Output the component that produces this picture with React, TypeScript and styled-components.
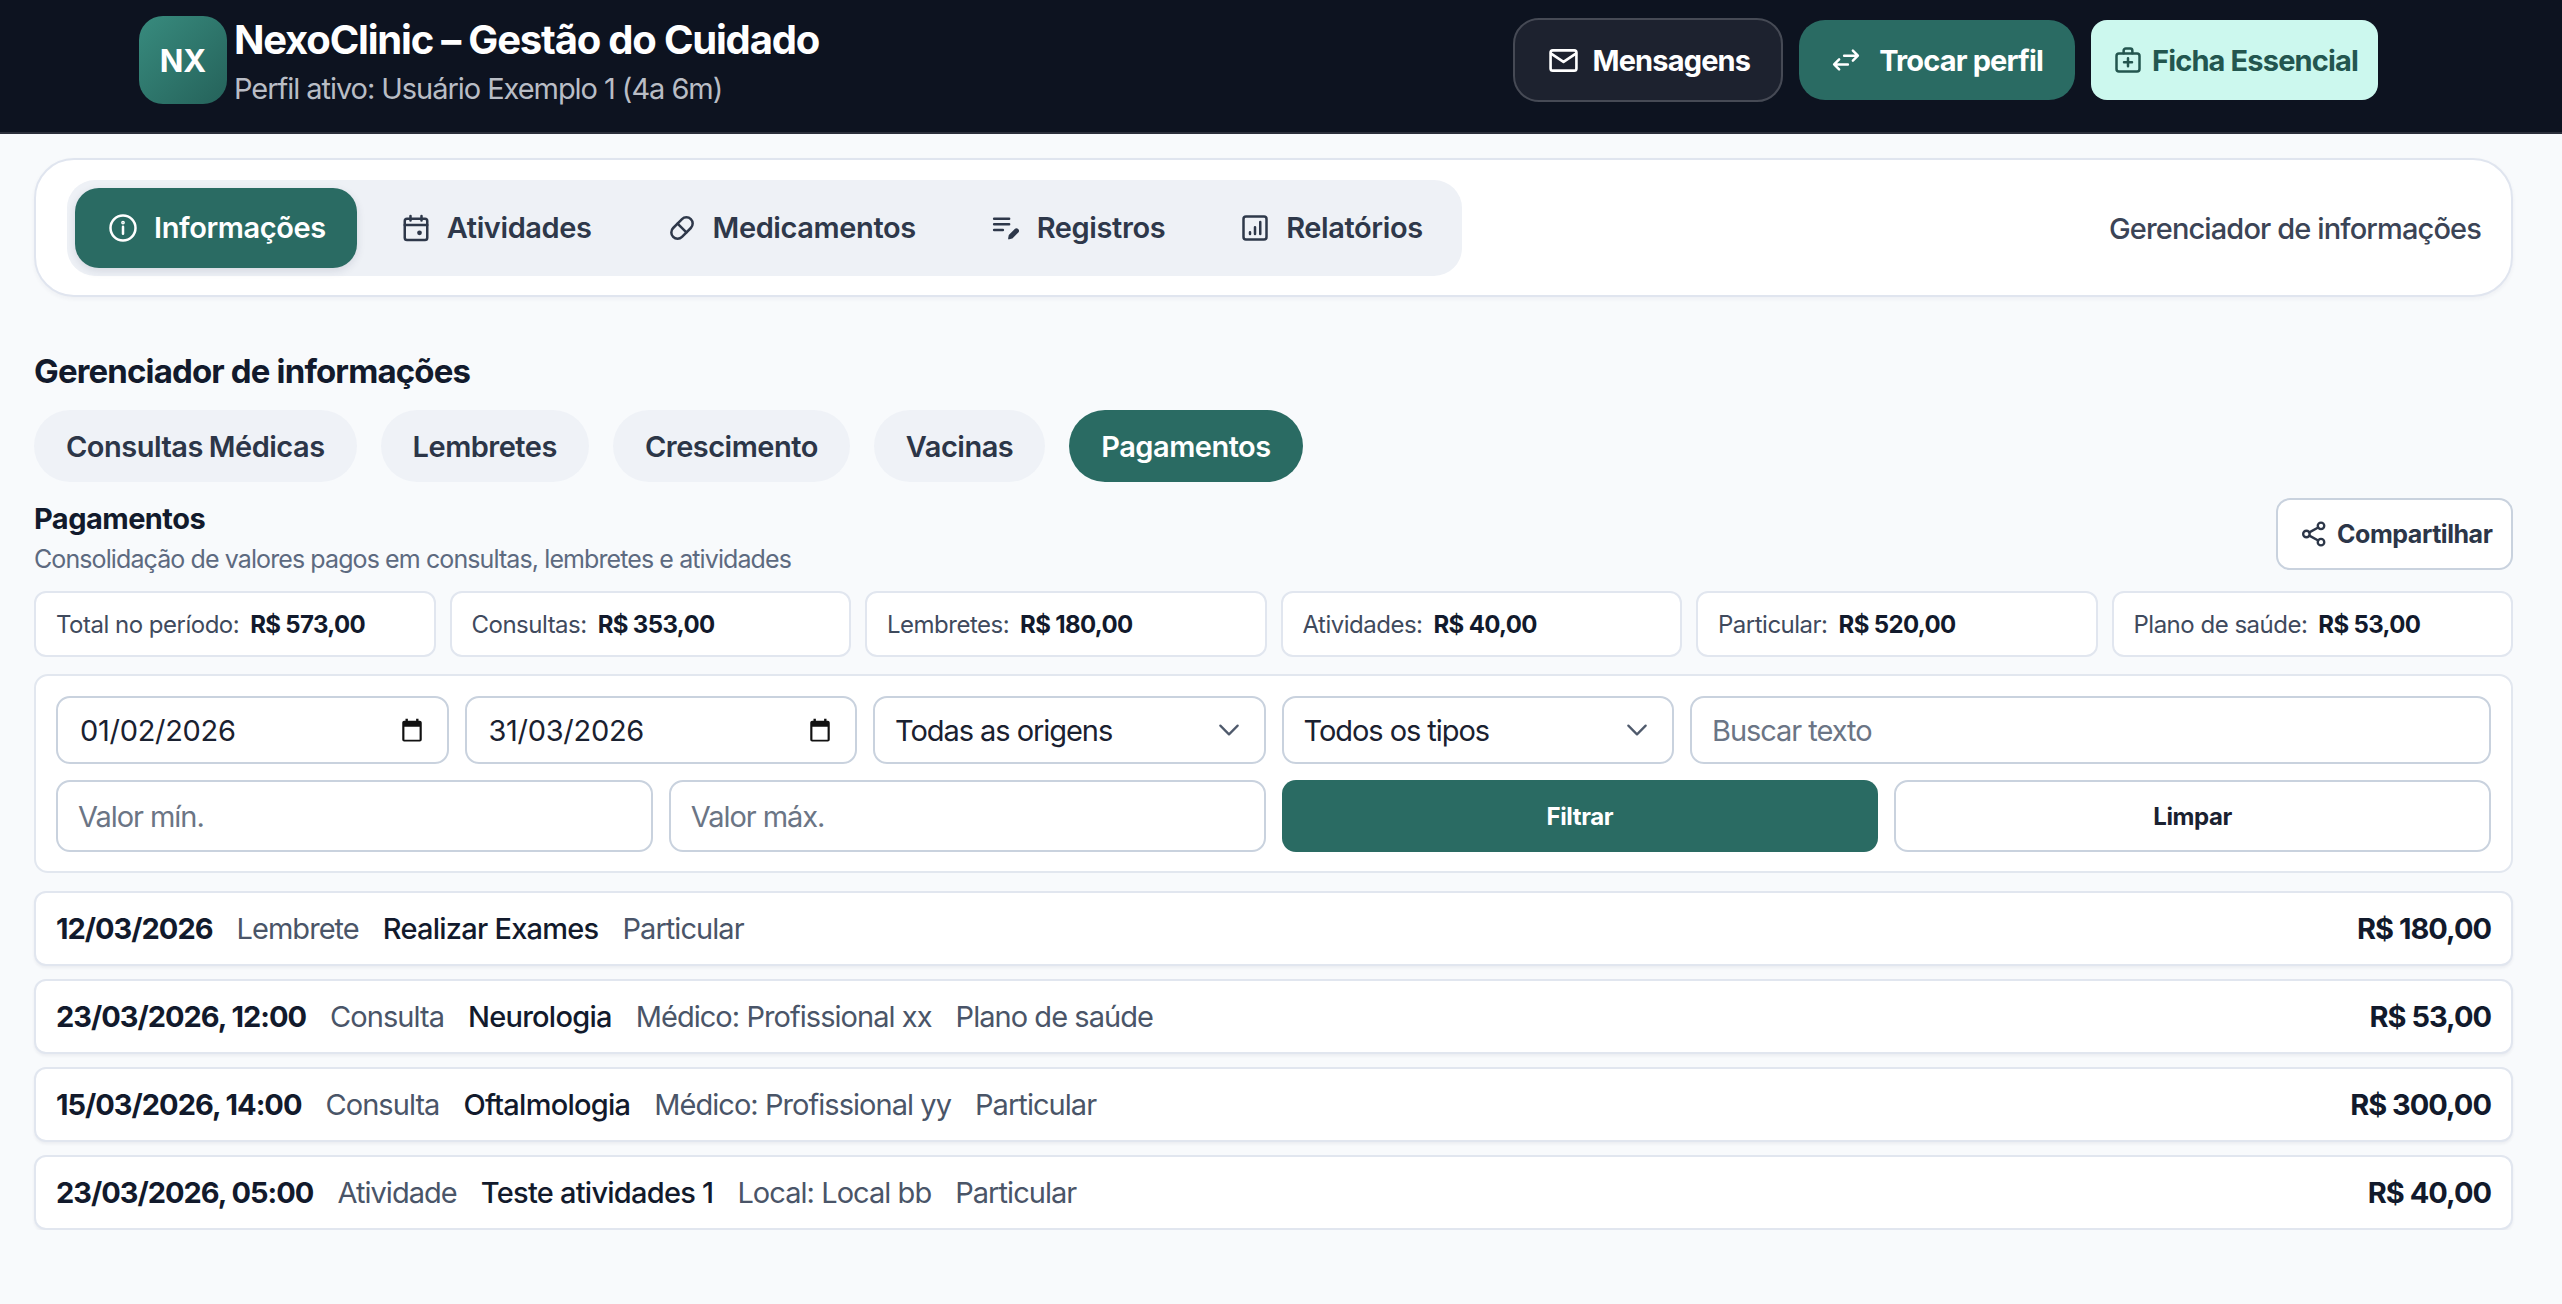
import React from 'react';
import styled, { createGlobalStyle } from 'styled-components';

const Global = createGlobalStyle`
  html, body { margin: 0; padding: 0; background: #f8fafc; }
  body { font-family: Inter, "Liberation Sans", sans-serif; color: #121a2c; }
  * { box-sizing: border-box; }
`;

const green = '#2a6b63';

const Ic = ({ size = 30, children, w = 2 }: { size?: number; children: React.ReactNode; w?: number }) => (
  <svg width={size} height={size} viewBox="0 0 24 24" fill="none" stroke="currentColor" strokeWidth={w} strokeLinecap="round" strokeLinejoin="round" style={{ flex: 'none' }}>
    {children}
  </svg>
);

const MailIcon = () => (
  <Ic size={33} w={1.9}><rect x="2.6" y="4.6" width="18.8" height="14.8" rx="1.6" /><path d="M3 7l9 6 9-6" /></Ic>
);
const SwapIcon = () => (
  <Ic><path d="M21 8.5H10.5M17.5 4.5l4 4-4 4M3 15.5h10.5M6.5 11.5l-4 4 4 4" /></Ic>
);
const BagIcon = () => (
  <Ic><rect x="2.8" y="6.8" width="18.4" height="14.4" rx="2" /><path d="M8.5 6.5V4.5a1.7 1.7 0 0 1 1.7-1.7h3.6a1.7 1.7 0 0 1 1.7 1.7v2M12 10.6v6.4M8.8 13.8h6.4" /></Ic>
);
const InfoIcon = () => (
  <Ic><circle cx="12" cy="12" r="10" /><path d="M12 11v5.5" /><circle cx="12" cy="7.6" r="0.5" fill="currentColor" /></Ic>
);
const CalendarIcon = () => (
  <Ic><rect x="3" y="4.5" width="18" height="17" rx="1.8" /><path d="M3 9.5h18M7.6 2.4v3.6M16.4 2.4v3.6" /><circle cx="14.8" cy="15.8" r="1.9" fill="currentColor" stroke="none" /></Ic>
);
const PillIcon = () => (
  <Ic><g transform="rotate(-45 12 12)"><rect x="2" y="7" width="20" height="10" rx="5" /><path d="M12 7v10" /></g></Ic>
);
const NotesIcon = () => (
  <Ic><path d="M2.5 4.5h12M2.5 9h12M2.5 13.5h7" /><path d="M14.4 20.4l.5-2.6 4.6-4.6a1.2 1.2 0 0 1 1.7 0l.2.2a1.2 1.2 0 0 1 0 1.7l-4.6 4.6z" fill="currentColor" strokeWidth="1.4" /></Ic>
);
const ChartIcon = () => (
  <Ic><rect x="2.8" y="2.8" width="18.4" height="18.4" rx="2" /><path d="M8 15.4v1.4M12 11.4v5.4M16.2 7.2v9.6" /></Ic>
);
const ShareIcon = () => (
  <Ic size={28}><circle cx="18" cy="5" r="2.8" /><circle cx="5.5" cy="12" r="2.8" /><circle cx="18" cy="19" r="2.8" /><path d="M8 10.6l7.6-4.2M8 13.4l7.6 4.2" /></Ic>
);
const DateIcon = () => (
  <svg width="26" height="26" viewBox="0 0 24 24" style={{ flex: 'none' }}>
    <path fill="#111" d="M6 1.5h2.2v2h7.6v-2H18v2h1.2c1 0 1.8.8 1.8 1.8v15.4c0 1-.8 1.8-1.8 1.8H4.8c-1 0-1.8-.8-1.8-1.8V5.3c0-1 .8-1.8 1.8-1.8H6zM5 9v12h14V9z" />
  </svg>
);
const ChevronIcon = () => (
  <svg width="26" height="26" viewBox="0 0 24 24" fill="none" stroke="#4f5a6c" strokeWidth="2.1" strokeLinecap="round" strokeLinejoin="round" style={{ flex: 'none' }}>
    <path d="M4 8l8 8 8-8" />
  </svg>
);

const Header = styled.header`
  display: flex;
  justify-content: space-between;
  align-items: flex-start;
  height: 134px;
  padding: 16px 184px 0 139px;
  background: #0d1320;
  border-bottom: 2px solid #2b2f3b;
`;
const Brand = styled.div`
  display: flex;
  gap: 7px;
`;
const Logo = styled.div`
  width: 88px;
  height: 88px;
  border-radius: 24px;
  background: linear-gradient(135deg, #388b7e, #25625a);
  color: #fff;
  font-size: 31px;
  font-weight: 700;
  display: flex;
  align-items: center;
  justify-content: center;
`;
const BrandTitle = styled.div`
  font-size: 40px;
  line-height: 48px;
  font-weight: 700;
  color: #fff;
  letter-spacing: -1.2px;
  white-space: nowrap;
`;
const BrandSub = styled.div`
  margin-top: 5px;
  font-size: 29px;
  line-height: 40px;
  color: #b9bdc5;
  letter-spacing: -1.05px;
  white-space: nowrap;
`;
const Actions = styled.div`
  display: flex;
  align-items: center;
  gap: 16px;
  height: 88px;
`;
const buttonPadding = { dark: '0 31px 0 32px', green: '0 32px', mint: '0 20px 0 22px' };
const buttonGap = { dark: '12px', green: '18px', mint: '9px' };
const HeadButton = styled.button<{ $kind: 'dark' | 'green' | 'mint' }>`
  display: flex;
  align-items: center;
  border-radius: ${(p) => (p.$kind === 'mint' ? '16px' : '26px')};
  font-family: inherit;
  font-size: 29px;
  font-weight: 700;
  letter-spacing: -0.85px;
  white-space: nowrap;
  height: ${(p) => (p.$kind === 'dark' ? '84px' : '80px')};
  gap: ${(p) => buttonGap[p.$kind]};
  padding: ${(p) => buttonPadding[p.$kind]};
  background: ${(p) => (p.$kind === 'dark' ? '#1d222f' : p.$kind === 'green' ? green : '#ccf8ee')};
  color: ${(p) => (p.$kind === 'mint' ? '#23564f' : '#fff')};
  border: ${(p) => (p.$kind === 'dark' ? '2px solid #464a55' : 'none')};
`;

const Main = styled.main`
  padding: 24px 49px 0 34px;
`;
const NavCard = styled.nav`
  display: flex;
  align-items: center;
  justify-content: space-between;
  height: 139px;
  padding: 0 30px 0 31px;
  background: #fff;
  border: 2px solid #e0e5ef;
  border-radius: 40px;
  box-shadow: 0 2px 4px rgba(30, 40, 70, 0.05);
`;
const NavTabs = styled.div`
  display: flex;
  align-items: center;
  gap: 11px;
  height: 96px;
  padding: 0 8px;
  background: #eef1f6;
  border-radius: 28px;
`;
const NavTab = styled.div<{ $active?: boolean }>`
  display: flex;
  align-items: center;
  gap: 16px;
  height: 80px;
  padding: 0 31px 0 33px;
  border-radius: 24px;
  font-size: 29px;
  font-weight: 600;
  letter-spacing: -0.4px;
  white-space: nowrap;
  background: ${(p) => (p.$active ? green : 'transparent')};
  color: ${(p) => (p.$active ? '#fff' : '#2e384a')};
  box-shadow: ${(p) => (p.$active ? '0 3px 8px rgba(30,40,70,0.12)' : 'none')};
`;
const NavCaption = styled.div`
  font-size: 29px;
  font-weight: 500;
  color: #3b4456;
  letter-spacing: -0.87px;
  padding-top: 1px;
`;
const SectionTitle = styled.h1`
  margin: 54px 0 0;
  font-size: 33px;
  line-height: 40px;
  font-weight: 700;
  letter-spacing: -0.85px;
  color: #121a2c;
`;
const Pills = styled.div`
  display: flex;
  gap: 24px;
  margin-top: 19px;
`;
const Pill = styled.div<{ $active?: boolean }>`
  display: flex;
  align-items: center;
  height: 72px;
  padding: 0 32px;
  border-radius: 36px;
  font-size: 29px;
  font-weight: 600;
  letter-spacing: -0.5px;
  word-spacing: -1px;
  background: ${(p) => (p.$active ? green : '#eff2f7')};
  color: ${(p) => (p.$active ? '#fff' : '#2c3648')};
`;
const SubHead = styled.div`
  display: flex;
  justify-content: space-between;
  align-items: flex-start;
  height: 72px;
  margin-top: 16px;
`;
const SubTitle = styled.div`
  font-size: 29px;
  line-height: 40px;
  font-weight: 700;
  letter-spacing: -0.55px;
  color: #121a2c;
  margin-top: 1px;
`;
const SubText = styled.div`
  font-size: 25px;
  line-height: 28px;
  color: #5d6a80;
  letter-spacing: -0.9px;
  margin-top: 6px;
`;
const ShareButton = styled.button`
  display: flex;
  align-items: center;
  gap: 9px;
  height: 72px;
  width: 237px;
  padding: 0 0 0 22px;
  background: #fff;
  border: 2px solid #c9d2de;
  border-radius: 14px;
  color: #2c3648;
  font-family: inherit;
  font-size: 25px;
  font-weight: 700;
  letter-spacing: -0.45px;
`;
const Summary = styled.div`
  display: grid;
  grid-template-columns: repeat(6, 1fr);
  gap: 14px;
  margin-top: 21px;
`;
const SummaryCard = styled.div`
  display: flex;
  align-items: center;
  gap: 11px;
  height: 66px;
  padding: 0 20px;
  background: #fff;
  border: 2px solid #e1e6ef;
  border-radius: 12px;
  font-size: 24px;
  color: #3f4a5d;
  letter-spacing: -0.5px;
  white-space: nowrap;
`;
const SummaryValue = styled.strong`
  font-weight: 700;
  color: #121a2c;
  letter-spacing: -0.65px;
`;
const FilterCard = styled.section`
  display: grid;
  grid-template-columns: repeat(12, 1fr);
  grid-template-rows: 68px 72px;
  gap: 16px;
  margin-top: 17px;
  padding: 20px 20px 19px;
  background: #fff;
  border: 2px solid #e2e7ef;
  border-radius: 14px;
`;
const Field = styled.div<{ $span: number; $date?: boolean }>`
  grid-column: span ${(p) => p.$span};
  display: flex;
  align-items: center;
  justify-content: space-between;
  padding: 0 22px 0 ${(p) => (p.$date ? 22 : 20)}px;
  background: #fff;
  border: 2px solid #c9d2de;
  border-radius: 14px;
  font-size: 29px;
  color: #1a2130;
  letter-spacing: ${(p) => (p.$date ? '-0.3px' : '-1.05px')};
`;
const FieldInput = styled.input`
  flex: 1;
  min-width: 0;
  border: 0;
  outline: 0;
  padding: 0;
  background: transparent;
  font: inherit;
  letter-spacing: inherit;
  color: inherit;
  &::placeholder { color: #6b7585; opacity: 1; }
`;
const FilterButton = styled.button<{ $primary?: boolean }>`
  grid-column: span 3;
  border-radius: 14px;
  font-family: inherit;
  font-size: 24px;
  font-weight: 700;
  letter-spacing: -0.4px;
  background: ${(p) => (p.$primary ? green : '#fff')};
  color: ${(p) => (p.$primary ? '#fff' : '#1a2130')};
  border: ${(p) => (p.$primary ? 'none' : '2px solid #c9d2de')};
`;
const Rows = styled.div`
  display: flex;
  flex-direction: column;
  gap: 13px;
  margin-top: 18px;
`;
const Row = styled.div`
  display: flex;
  align-items: center;
  gap: 24px;
  height: 75px;
  padding: 0 20px;
  background: #fff;
  border: 2px solid #e1e6ef;
  border-radius: 12px;
  box-shadow: 0 2px 3px rgba(30, 40, 70, 0.06);
  font-size: 29px;
  letter-spacing: -0.95px;
  white-space: nowrap;
`;
const RowDate = styled.span`
  font-weight: 700;
  color: #121a2c;
  letter-spacing: -1px;
`;
const RowName = styled.span`
  font-weight: 500;
  color: #121a2c;
  letter-spacing: -0.75px;
`;
const RowMeta = styled.span`
  color: #4a5568;
`;
const RowValue = styled.span`
  margin-left: auto;
  font-weight: 700;
  color: #121a2c;
  letter-spacing: -1px;
`;

const navItems = [
  { label: 'Informações', icon: <InfoIcon />, active: true },
  { label: 'Atividades', icon: <CalendarIcon /> },
  { label: 'Medicamentos', icon: <PillIcon /> },
  { label: 'Registros', icon: <NotesIcon /> },
  { label: 'Relatórios', icon: <ChartIcon /> },
];
const pills = ['Consultas Médicas', 'Lembretes', 'Crescimento', 'Vacinas', 'Pagamentos'];
const totals = [
  ['Total no período:', 'R$ 573,00'],
  ['Consultas:', 'R$ 353,00'],
  ['Lembretes:', 'R$ 180,00'],
  ['Atividades:', 'R$ 40,00'],
  ['Particular:', 'R$ 520,00'],
  ['Plano de saúde:', 'R$ 53,00'],
];
const payments = [
  { date: '12/03/2026', kind: 'Lembrete', name: 'Realizar Exames', meta: ['Particular'], value: 'R$ 180,00' },
  { date: '23/03/2026, 12:00', kind: 'Consulta', name: 'Neurologia', meta: ['Médico: Profissional xx', 'Plano de saúde'], value: 'R$ 53,00' },
  { date: '15/03/2026, 14:00', kind: 'Consulta', name: 'Oftalmologia', meta: ['Médico: Profissional yy', 'Particular'], value: 'R$ 300,00' },
  { date: '23/03/2026, 05:00', kind: 'Atividade', name: 'Teste atividades 1', meta: ['Local: Local bb', 'Particular'], value: 'R$ 40,00' },
];

export default function App() {
  return (
    <>
      <Global />
      <Header>
        <Brand>
          <Logo>NX</Logo>
          <div>
            <BrandTitle>NexoClinic – Gestão do Cuidado</BrandTitle>
            <BrandSub>Perfil ativo: Usuário Exemplo 1 (4a 6m)</BrandSub>
          </div>
        </Brand>
        <Actions>
          <HeadButton $kind="dark"><MailIcon />Mensagens</HeadButton>
          <HeadButton $kind="green"><SwapIcon />Trocar perfil</HeadButton>
          <HeadButton $kind="mint"><BagIcon />Ficha Essencial</HeadButton>
        </Actions>
      </Header>
      <Main>
        <NavCard>
          <NavTabs>
            {navItems.map((item) => (
              <NavTab key={item.label} $active={item.active}>
                {item.icon}
                {item.label}
              </NavTab>
            ))}
          </NavTabs>
          <NavCaption>Gerenciador de informações</NavCaption>
        </NavCard>

        <SectionTitle>Gerenciador de informações</SectionTitle>
        <Pills>
          {pills.map((p) => (
            <Pill key={p} $active={p === 'Pagamentos'}>{p}</Pill>
          ))}
        </Pills>

        <SubHead>
          <div>
            <SubTitle>Pagamentos</SubTitle>
            <SubText>Consolidação de valores pagos em consultas, lembretes e atividades</SubText>
          </div>
          <ShareButton><ShareIcon />Compartilhar</ShareButton>
        </SubHead>

        <Summary>
          {totals.map(([label, value]) => (
            <SummaryCard key={label}>
              {label}
              <SummaryValue>{value}</SummaryValue>
            </SummaryCard>
          ))}
        </Summary>

        <FilterCard>
          <Field $span={2} $date><FieldInput defaultValue="01/02/2026" /><DateIcon /></Field>
          <Field $span={2} $date><FieldInput defaultValue="31/03/2026" /><DateIcon /></Field>
          <Field $span={2}>Todas as origens<ChevronIcon /></Field>
          <Field $span={2}>Todos os tipos<ChevronIcon /></Field>
          <Field $span={4}><FieldInput placeholder="Buscar texto" /></Field>
          <Field $span={3}><FieldInput placeholder="Valor mín." /></Field>
          <Field $span={3}><FieldInput placeholder="Valor máx." /></Field>
          <FilterButton $primary>Filtrar</FilterButton>
          <FilterButton>Limpar</FilterButton>
        </FilterCard>

        <Rows>
          {payments.map((row) => (
            <Row key={row.date}>
              <RowDate>{row.date}</RowDate>
              <RowMeta>{row.kind}</RowMeta>
              <RowName>{row.name}</RowName>
              {row.meta.map((m) => (
                <RowMeta key={m}>{m}</RowMeta>
              ))}
              <RowValue>{row.value}</RowValue>
            </Row>
          ))}
        </Rows>
      </Main>
    </>
  );
}
